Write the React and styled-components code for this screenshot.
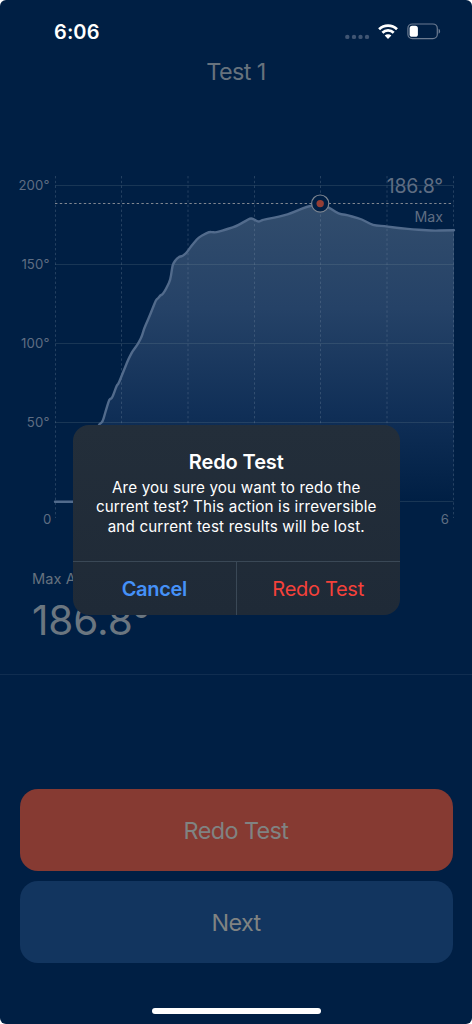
import React from 'react';
import styled, { createGlobalStyle } from 'styled-components';

const GlobalStyle = createGlobalStyle`
  * {
    box-sizing: border-box;
  }
  body {
    margin: 0;
    background: #fff;
    font-family: Inter, 'Liberation Sans', sans-serif;
  }
`;

const Screen = styled.div`
  position: relative;
  display: flex;
  flex-direction: column;
  width: 472px;
  height: 1024px;
  background: #001f44;
  border-radius: 6px;
  overflow: hidden;
`;

const StatusBar = styled.header`
  display: flex;
  justify-content: space-between;
  align-items: center;
  height: 46px;
  padding: 16px 31px 0 54px;
`;

const Clock = styled.span`
  padding-top: 1px;
  color: #fff;
  font-size: 20px;
  font-weight: 600;
  line-height: 30px;
  letter-spacing: 0.1px;
`;

const Title = styled.h1`
  margin: 0;
  padding-top: 11px;
  height: 119px;
  color: #67727d;
  font-size: 23.4px;
  font-weight: 400;
  line-height: 30px;
  letter-spacing: -0.6px;
  text-align: center;
`;

const ChartSvg = styled.svg`
  display: block;
  flex: none;
`;

const AxisLabel = styled.text`
  fill: #5f6d82;
  font-size: 13.2px;
  letter-spacing: 0.1px;
  text-anchor: end;
`;

const PeakLabel = styled.text`
  fill: #5f6d82;
  font-size: ${(props) => props.$size}px;
  letter-spacing: ${(props) => props.$spacing}px;
  text-anchor: end;
`;

const Stats = styled.section`
  height: 140px;
  padding: 35px 32px 0;
  border-bottom: 1px solid #102d50;
`;

const StatName = styled.div`
  color: #66727e;
  font-size: 14.6px;
  line-height: 18px;
  letter-spacing: 0.1px;
`;

const StatValue = styled.div`
  margin-top: 9px;
  color: #6b7680;
  font-size: 40.5px;
  font-weight: 400;
  line-height: 48px;
  letter-spacing: -0.1px;
`;

const Actions = styled.div`
  display: flex;
  flex-direction: column;
  gap: 10px;
  padding: 114px 19.5px 0;
`;

const ActionButton = styled.button`
  height: 82px;
  padding: 0;
  border: none;
  border-radius: 18px;
  background: ${(props) => (props.$danger ? '#863a32' : '#12355f')};
  color: #808382;
  font-family: inherit;
  font-size: 23.4px;
  font-weight: 400;
  letter-spacing: -0.6px;
`;

const HomeIndicator = styled.div`
  width: 169px;
  height: 6px;
  margin: 45px auto 0;
  border-radius: 3px;
  background: #fff;
`;

const Alert = styled.div`
  position: absolute;
  top: 425px;
  left: 73px;
  display: flex;
  flex-direction: column;
  width: 326.5px;
  height: 189.5px;
  border-radius: 16px;
  background: linear-gradient(#232e3a, #1f2a37);
  overflow: hidden;
`;

const AlertBody = styled.div`
  flex: 1;
  padding-top: 24px;
  text-align: center;
  color: #fff;
`;

const AlertTitle = styled.h2`
  margin: 0;
  font-size: 20px;
  font-weight: 600;
  line-height: 26px;
  letter-spacing: -0.1px;
`;

const AlertText = styled.p`
  margin: 3px 0 0;
  font-size: 15.2px;
  line-height: 19.4px;
  letter-spacing: 0.17px;
  white-space: pre-line;
`;

const AlertButtons = styled.div`
  display: flex;
  height: 53.5px;
  border-top: 1px solid #3a4856;
`;

const AlertButton = styled.button`
  flex: 1;
  padding: 1px 0 0;
  border: none;
  background: none;
  font-family: inherit;
  font-size: 20px;
  letter-spacing: -0.3px;
  color: ${(props) => (props.$danger ? '#f5413a' : '#4591f8')};
  font-weight: ${(props) => (props.$danger ? 400 : 600)};

  & + & {
    border-left: 1px solid #3a4856;
  }
`;

const points = [
  [55, 501.7], [84, 501.7], [88, 480], [93, 445], [98.5, 424.8], [102.7, 421.7],
  [106, 410], [109.3, 399.5], [111.7, 398.3], [113.3, 395], [116.7, 385.5],
  [118.7, 383.3], [124, 370], [128.5, 359], [132.7, 351], [137.3, 345],
  [141.7, 336.7], [144, 329], [150, 315], [156, 300], [158.3, 298],
  [160.3, 295.5], [162.7, 294.3], [166, 289], [170.3, 280], [172.7, 264.5],
  [176, 259.5], [179.3, 256.7], [182.7, 256], [186.7, 252.5], [191.7, 245.5],
  [199, 237], [209.3, 231.9], [216, 232.5], [225, 229.8], [236, 226.3],
  [243, 222.5], [251, 217.9], [258.7, 221.9], [262.7, 219.9], [279.3, 216.7],
  [291, 213.3], [307.7, 206.2], [320.3, 204.5], [328, 207], [338.7, 213.8],
  [347.7, 215.2], [362, 219.5], [373, 225.2], [384.3, 226.2], [396, 227.7],
  [412.7, 229.4], [432.7, 230.7], [454, 230.2],
];

const between = (a, b, t) => `${a[0] + (b[0] - a[0]) * t} ${a[1] + (b[1] - a[1]) * t}`;

// Straight segments with slightly rounded corners
const trace = (pts) =>
  pts.slice(1).reduce((d, p, i) => {
    const next = pts[i + 2];
    if (!next) return `${d} L${p[0]} ${p[1]}`;
    return `${d} L${between(p, pts[i], 0.3)} Q${p[0]} ${p[1]} ${between(p, next, 0.3)}`;
  }, `M${pts[0][0]} ${pts[0][1]}`);

const rows = [
  { y: 185.5, label: '200°' },
  { y: 264.5, label: '150°' },
  { y: 343.5, label: '100°' },
  { y: 422.5, label: '50°' },
  { y: 501.5 },
];
const columns = [55.5, 121.5, 188, 254.5, 320.5, 387, 453.5];

const Chart = () => {
    const line = trace(points);

    return (
        <ChartSvg width="472" height="370" viewBox="0 165 472 370">
            <defs>
                <linearGradient id="fill" gradientUnits="userSpaceOnUse" x1="0" y1="204" x2="0" y2="502">
                    <stop offset="0" stopColor="#324d6d" />
                    <stop offset="0.35" stopColor="#254267" />
                    <stop offset="0.7" stopColor="#102f57" />
                    <stop offset="1" stopColor="#001f44" />
                </linearGradient>
            </defs>
            <path d={`${line} V501.7 H55 Z`} fill="url(#fill)" />
            {rows.map((row) => (
                <React.Fragment key={row.y}>
                    <path d={`M55 ${row.y}H453.5`} stroke="#8aa0a8" strokeOpacity="0.18" />
                    {row.label && (
                        <AxisLabel x="49.5" y={row.y + 4.3}>{row.label}</AxisLabel>
                    )}
                </React.Fragment>
            ))}
            {columns.map((x) => (
                <path key={x} d={`M${x} 176V518`} stroke="#8aa0b0" strokeOpacity="0.26" strokeDasharray="2.4 2.4" />
            ))}
            <AxisLabel x="51.3" y="524">0</AxisLabel>
            <AxisLabel x="449" y="524">6</AxisLabel>
            <path d={line} fill="none" stroke="#526b8c" strokeWidth="2.4" strokeLinejoin="round" strokeLinecap="round" />
            <path d="M55 203.5H453.5" stroke="#818791" strokeDasharray="2.4 2.4" />
            <circle cx="320.2" cy="203.6" r="8.6" fill="#001f44" stroke="#7c8591" strokeWidth="1.2" />
            <circle cx="320.2" cy="203.6" r="3.7" fill="#933e35" />
            <PeakLabel x="443" y="193.2" $size={19.5} $spacing={-0.15}>186.8°</PeakLabel>
            <PeakLabel x="443" y="221.8" $size={14.2} $spacing={0}>Max</PeakLabel>
        </ChartSvg>
    );
};

const StatusIcons = () => (
    <svg width="97" height="20" viewBox="344 21 97 20">
        {[347.3, 354, 360.5, 367].map((x) => (
            <circle key={x} cx={x} cy="36.9" r="2.2" fill="#405573" />
        ))}
        <g fill="none" stroke="#fff" strokeWidth="2.7">
            <path d="M379.1 29.3A12.8 12.8 0 0 1 397 29.3" />
            <path d="M382.4 32.7A8 8 0 0 1 393.7 32.7" />
        </g>
        <path d="M388 38.9L384.7 35.6A4.8 4.8 0 0 1 391.4 35.6Z" fill="#fff" />
        <rect x="407.9" y="24" width="29.4" height="14.6" rx="4.4" fill="none" stroke="#6b7b91" strokeWidth="1.2" />
        <path d="M438.6 28.8C440.6 29.6 440.6 33 438.6 33.8Z" fill="#6b7b91" />
        <rect x="409.6" y="25.8" width="8.3" height="11" rx="2.6" fill="#fff" />
    </svg>
);

const App = () => {
    return (
        <Screen>
            <GlobalStyle />
            <StatusBar>
                <Clock>6:06</Clock>
                <StatusIcons />
            </StatusBar>
            <Title>Test 1</Title>
            <Chart />
            <Stats>
                <StatName>Max Angle</StatName>
                <StatValue>186.8°</StatValue>
            </Stats>
            <Actions>
                <ActionButton $danger>Redo Test</ActionButton>
                <ActionButton>Next</ActionButton>
            </Actions>
            <HomeIndicator />
            <Alert role="alertdialog">
                <AlertBody>
                    <AlertTitle>Redo Test</AlertTitle>
                    <AlertText>
                        {'Are you sure you want to redo the\ncurrent test? This action is irreversible\nand current test results will be lost.'}
                    </AlertText>
                </AlertBody>
                <AlertButtons>
                    <AlertButton>Cancel</AlertButton>
                    <AlertButton $danger>Redo Test</AlertButton>
                </AlertButtons>
            </Alert>
        </Screen>
    );
};

export default App;
